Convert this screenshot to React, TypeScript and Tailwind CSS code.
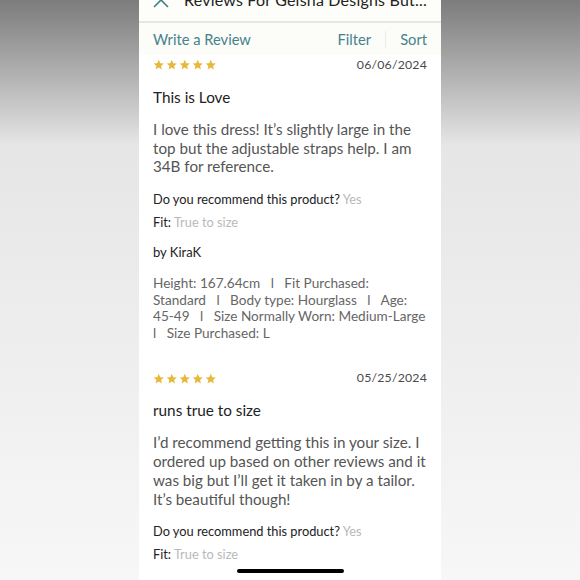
import React from 'react';

type Review = {
  date: string;
  title: string;
  body: string[];
  author?: string;
  details?: string[];
};

const reviews: Review[] = [
  {
    date: '06/06/2024',
    title: 'This is Love',
    body: [
      'I love this dress! It\u2019s slightly large in the',
      'top but the adjustable straps help. I am',
      '34B for reference.',
    ],
    author: 'KiraK',
    details: [
      'Height: 167.64cm \u00a0 l \u00a0 Fit Purchased:',
      'Standard \u00a0 l \u00a0 Body type: Hourglass \u00a0 l \u00a0 Age:',
      '45-49 \u00a0 l \u00a0 Size Normally Worn: Medium-Large',
      'l \u00a0 Size Purchased: L',
    ],
  },
  {
    date: '05/25/2024',
    title: 'runs true to size',
    body: [
      'I\u2019d recommend getting this in your size. I',
      'ordered up based on other reviews and it',
      'was big but I\u2019ll get it taken in by a tailor.',
      'It\u2019s beautiful though!',
    ],
  },
];

const Stars: React.FC = () => (
  <div className="flex gap-[1.5px]">
    {[0, 1, 2, 3, 4].map(i => (
      <svg key={i} width="11.5" height="11.5" viewBox="0 0 24 24">
        <path
          d="M12 1.8l3.1 6.9 7.4.7-5.6 5 1.7 7.4L12 17.9l-6.6 3.9 1.7-7.4-5.6-5 7.4-.7z"
          fill="#e8b83a"
        />
      </svg>
    ))}
  </div>
);

const ReviewItem: React.FC<{ review: Review }> = ({ review }) => (
  <div className="pb-[27px]">
    <div className="flex items-center justify-between h-[20px]">
      <Stars />
      <span className="text-[12.3px] text-[#4a4a4a] tracking-[0.2px]">{review.date}</span>
    </div>
    <div className="mt-[12px] text-[15.3px] text-[#222] leading-[20px]">{review.title}</div>
    <p className="mt-[13px] text-[15.2px] text-[#555] leading-[18.7px] whitespace-nowrap">
      {review.body.map((line, i) => (
        <span key={i} className="block">{line}</span>
      ))}
    </p>
    <div className="mt-[14px] text-[12.8px] leading-[18px] text-[#222]">
      Do you recommend this product? <span className="text-[#b9b9b9]">Yes</span>
    </div>
    <div className="mt-[5px] text-[12.8px] leading-[18px] text-[#222]">
      Fit: <span className="text-[#b9b9b9]">True to size</span>
    </div>
    {review.author && (
      <div className="mt-[12px] text-[13px] leading-[18px] text-[#222]">by {review.author}</div>
    )}
    {review.details && (
      <div className="mt-[14px] text-[13.6px] leading-[16.6px] text-[#666] whitespace-nowrap">
        {review.details.map((line, i) => (
          <span key={i} className="block">{line}</span>
        ))}
      </div>
    )}
  </div>
);

export default function App() {
  return (
    <div
      className="w-[580px] h-[580px] overflow-hidden flex justify-center bg-gradient-to-b from-[#7c7c7c] via-[#e6e6e6] via-25% to-[#f7f7f7]"
      style={{ fontFamily: 'Lato, "Open Sans", sans-serif' }}
    >
      <div className="relative w-[302px] h-full bg-white overflow-hidden">
        <div className="h-[21px] bg-[#fdfdf9] overflow-hidden">
          <div className="-mt-[10px] flex items-center gap-[14px] px-[13px] h-[20px]">
            <svg width="18" height="18" viewBox="0 0 18 18" className="shrink-0">
              <path d="M2 2l14 14M16 2L2 16" stroke="#3f7d88" strokeWidth="1.6" fill="none" />
            </svg>
            <span className="text-[16px] text-[#222] whitespace-nowrap tracking-[0.2px]">
              Reviews For Geisha Designs But...
            </span>
          </div>
        </div>
        <div className="h-[2px] bg-[#e6e6e3]" />
        <div className="h-[32px] pt-[1px] bg-[#fcfcf8] flex items-center justify-between px-[14px]">
          <span className="text-[14.7px] text-[#45828d]">Write a Review</span>
          <div className="flex items-center">
            <span className="text-[14.7px] text-[#45828d]">Filter</span>
            <div className="w-px h-[17px] bg-[#ececea] mx-[14px]" />
            <span className="text-[14.7px] text-[#45828d]">Sort</span>
          </div>
        </div>
        <div className="px-[14px]">
          {reviews.map((r, i) => (
            <ReviewItem key={i} review={r} />
          ))}
        </div>
        <div className="absolute bottom-[7px] left-[98px] w-[107px] h-[4px] rounded-full bg-black" />
      </div>
    </div>
  );
}
